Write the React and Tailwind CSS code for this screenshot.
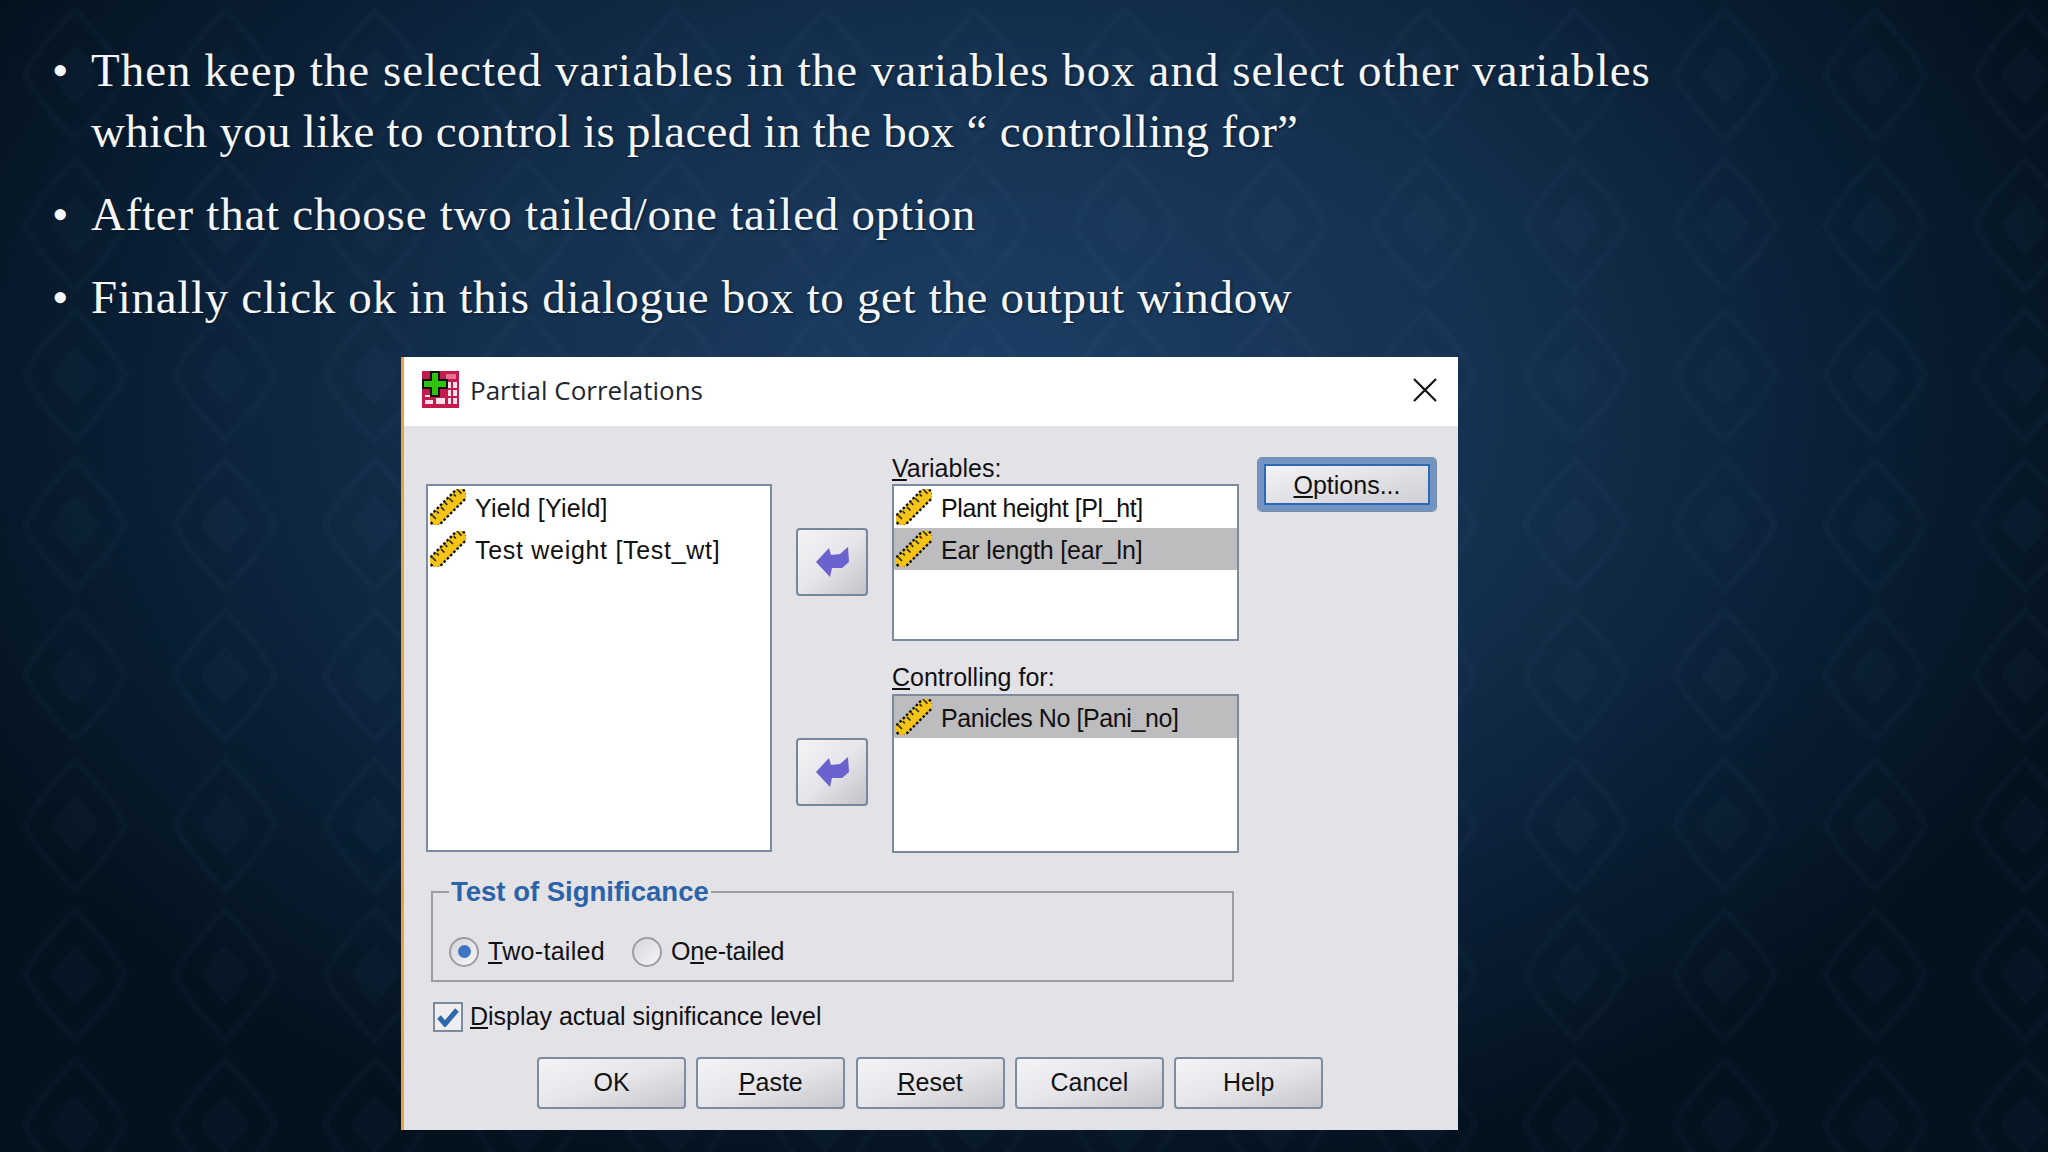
const BULLETS = [
  [["Then keep the selected variables in the variables box and select other variables", "tracking-[1px]"], ["which you like to control is placed in the box “ controlling for”", "tracking-[0.3px]"]],
  [["After that choose two tailed/one tailed option", "tracking-[0.74px]"]],
  [["Finally click ok in this dialogue box to get the output window", "tracking-[0.66px]"]],
];

function Ruler() {
  return (
    <svg width="36" height="36" viewBox="0 0 36 36" className="shrink-0">
      <g transform="rotate(-45 18 18)">
        <rect x="-5" y="11.5" width="46" height="13" fill="#f4c416" />
        <rect x="-5" y="11.5" width="46" height="13" fill="none" stroke="#111" strokeWidth="2.4" strokeDasharray="2.6 2" />
        <path d="M1 13v5M7 13v3M13 13v5M19 13v3M25 13v5M31 13v3M37 13v5" stroke="#222" strokeWidth="1.6" />
      </g>
    </svg>
  );
}

function VarRow({ label, selected, spacing = "" }) {
  return (
    <div className={`flex h-[42px] items-center pl-[2px] ${selected ? "bg-[#bdbcbf]" : ""}`}>
      <div className="w-[45px]"><Ruler /></div>
      <span className={`mt-[3px] font-['Liberation_Sans',sans-serif] text-[25px] text-[#111] ${spacing}`}>{label}</span>
    </div>
  );
}

function ArrowButton({ className }) {
  return (
    <button className={`flex h-[68px] w-[72px] items-center justify-center rounded-[4px] border-2 border-[#75879b] bg-gradient-to-br from-[#f4f3f6] via-[#e6e5e9] to-[#c3c2c8] ${className}`}>
      <svg width="33" height="30" viewBox="0 0 33 30">
        <path d="M0 15 13 1l2 7 9-1 8-7 1 15-7 6H16l-2 9z" fill="#6a62cf" />
      </svg>
    </button>
  );
}

function DlgButton({ children }) {
  return (
    <button className="h-[52px] w-[149px] rounded-[4px] border-2 border-[#7d8da1] bg-gradient-to-br from-[#f4f3f6] via-[#e6e5e9] to-[#c6c5cb] font-['Liberation_Sans',sans-serif] text-[25px] text-[#111]">
      {children}
    </button>
  );
}

export default function App() {
  return (
    <div className="relative h-[1152px] w-[2048px] overflow-hidden bg-[radial-gradient(ellipse_1150px_800px_at_1000px_400px,#1c3f66_0%,#14304f_45%,#0a1f35_75%,#04121f_100%)]">
      <svg className="absolute inset-0 h-full w-full opacity-[0.025]">
        <defs>
          <pattern id="damask" width="150" height="150" patternUnits="userSpaceOnUse">
            <path d="M75 10c18 20 34 34 50 65-16 31-32 45-50 65-18-20-34-34-50-65 16-31 32-45 50-65z" fill="none" stroke="#8fb6e0" strokeWidth="7" />
            <path d="M75 45c9 10 17 18 24 30-7 12-15 20-24 30-9-10-17-18-24-30 7-12 15-20 24-30z" fill="#8fb6e0" />
          </pattern>
        </defs>
        <rect width="100%" height="100%" fill="url(#damask)" />
      </svg>

      <div className="relative">
        <ul className="pt-[40px] pl-[52px] font-['Liberation_Serif',serif] text-[47px] leading-[61px] text-[#f4f6f8] [text-shadow:1px_1px_3px_#0a1a2c]">
          {BULLETS.map((lines) => (
            <li key={lines[0][0]} className="mb-[22px] flex last:mb-0">
              <span className="w-[39px] shrink-0">•</span>
              <div>
                {lines.map(([text, spacing]) => (
                  <div key={text} className={`whitespace-nowrap ${spacing}`}>{text}</div>
                ))}
              </div>
            </li>
          ))}
        </ul>

        <div className="mt-[29px] ml-[401px] h-[773px] w-[1057px] border-l-[3px] border-[#e8a33d] bg-[#e3e2e7]">
          <div className="flex h-[69px] items-center bg-white pr-[21px] pl-[18px]">
            <svg width="37" height="37" viewBox="0 0 37 37" className="-mt-1">
              <rect width="37" height="37" fill="#c41a4e" />
              <path d="M26 11h3v6h-3zM31 11h4v6h-4zM26 19h3v6h-3zM31 19h4v6h-4zM3 24h8v2H3zM14 27h9v6h-9zM26 27h3v6h-3zM31 27h4v6h-4zM3 29h8v4H3z" fill="#f6dfe6" />
              <path d="M24 3h10v5H24z" fill="#e5728f" />
              <path d="M9 1h8v8h8v8h-8v8H9v-8H1V9h8z" fill="#2fc20e" stroke="#111" strokeWidth="2" />
            </svg>
            <span className="-mt-[2px] ml-[11px] flex-1 font-['Open_Sans',sans-serif] text-[26px] text-[#1d2733]">Partial Correlations</span>
            <svg width="24" height="24" viewBox="0 0 24 24" className="-mt-[3px]">
              <path d="M1 1l22 22M23 1 1 23" stroke="#111" strokeWidth="2.2" />
            </svg>
          </div>

          <div className="pt-[32px] pl-[22px]">
            <div className="flex items-start">
              <div className="mt-[26px] h-[368px] w-[346px] border-2 border-[#7b8b9d] bg-white">
                <VarRow label="Yield [Yield]" spacing="tracking-[0.2px]" />
                <VarRow label="Test weight [Test_wt]" spacing="tracking-[0.7px]" />
              </div>

              <div className="ml-[24px] flex w-[72px] flex-col">
                <ArrowButton className="mt-[70px]" />
                <ArrowButton className="mt-[142px]" />
              </div>

              <div className="ml-[24px] w-[347px] font-['Liberation_Sans',sans-serif] text-[25px] text-[#111]">
                <div className="h-[26px] leading-[20px]"><u>V</u>ariables:</div>
                <div className="h-[157px] border-2 border-[#7b8b9d] bg-white">
                  <VarRow label="Plant height [Pl_ht]" spacing="tracking-[-0.4px]" />
                  <VarRow label="Ear length [ear_ln]" selected spacing="tracking-[-0.15px]" />
                </div>
                <div className="mt-[24px] h-[29px] leading-[25px]"><u>C</u>ontrolling for:</div>
                <div className="h-[159px] border-2 border-[#7b8b9d] bg-white">
                  <VarRow label="Panicles No [Pani_no]" selected spacing="tracking-[-0.4px]" />
                </div>
              </div>

              <div className="ml-[19px] h-[53px] w-[178px] rounded-[4px] border-[6px] border-[#7394c2] shadow-[0_0_0_1px_#7d8da1]">
                <button className="h-full w-full border-2 border-[#2b6ab3] bg-gradient-to-br from-[#f4f3f6] to-[#cfced4] pt-[2px] font-['Liberation_Sans',sans-serif] text-[25px] leading-none text-[#111]">
                  <u>O</u>ptions...
                </button>
              </div>
            </div>

            <fieldset className="mt-[24px] ml-[5px] h-[105px] w-[803px] border-2 border-[#9b9ba0] pl-[16px]">
              <legend className="px-[2px] font-['Liberation_Sans',sans-serif] text-[27.5px] leading-[30px] font-bold text-[#2a63a8]">Test of Significance</legend>
              <div className="mt-[26px] flex items-center font-['Liberation_Sans',sans-serif] text-[25px] text-[#111]">
                <span className="flex h-[30px] w-[30px] items-center justify-center rounded-full border-2 border-[#9c9ca2] bg-gradient-to-br from-[#d5d4da] to-[#f7f7f9]">
                  <span className="h-[13px] w-[13px] rounded-full bg-[#3f74c4]" />
                </span>
                <span className="ml-[9px] tracking-[0.3px]"><u>T</u>wo-tailed</span>
                <span className="ml-[27px] h-[30px] w-[30px] rounded-full border-2 border-[#9c9ca2] bg-gradient-to-br from-[#d5d4da] to-[#f7f7f9]" />
                <span className="ml-[9px] tracking-[-0.2px]">O<u>n</u>e-tailed</span>
              </div>
            </fieldset>

            <div className="mt-[16px] ml-[7px] flex items-center font-['Liberation_Sans',sans-serif] text-[25px] text-[#111]">
              <span className="flex h-[30px] w-[30px] items-center justify-center border-2 border-[#7b8b9d] bg-[#eeeef1]">
                <svg width="22" height="20" viewBox="0 0 22 20">
                  <path d="M2 10l6 7L20 3" fill="none" stroke="#2f67ad" strokeWidth="5" />
                </svg>
              </span>
              <span className="ml-[7px]"><u>D</u>isplay actual significance level</span>
            </div>

            <div className="mt-[21px] ml-[111px] flex gap-[10.3px]">
              <DlgButton>OK</DlgButton>
              <DlgButton><u>P</u>aste</DlgButton>
              <DlgButton><u>R</u>eset</DlgButton>
              <DlgButton>Cancel</DlgButton>
              <DlgButton>Help</DlgButton>
            </div>
          </div>
        </div>
      </div>
    </div>
  );
}
